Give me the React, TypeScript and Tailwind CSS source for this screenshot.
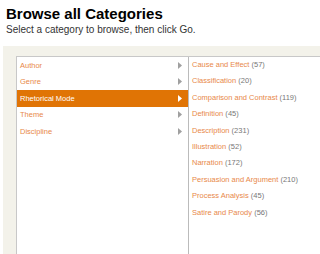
const LEFT = ['Author', 'Genre', 'Rhetorical Mode', 'Theme', 'Discipline'];
const RIGHT: [string, number][] = [
  ['Cause and Effect', 57],
  ['Classification', 20],
  ['Comparison and Contrast', 119],
  ['Definition', 45],
  ['Description', 231],
  ['Illustration', 52],
  ['Narration', 172],
  ['Persuasion and Argument', 210],
  ['Process Analysis', 45],
  ['Satire and Parody', 56],
];

function Arrow({ white }: { white?: boolean }) {
  return (
    <svg width="4" height="7" viewBox="0 0 4 7" className="shrink-0">
      <path d="M0 0 L4 3.5 L0 7 Z" fill={white ? '#ffffff' : '#a0a0a0'} />
    </svg>
  );
}

export default function App() {
  const selected = 'Rhetorical Mode';
  return (
    <div className="h-[254px] w-[320px] overflow-hidden bg-white font-['Liberation_Sans',Arial,sans-serif]">
      <div className="px-[6px] pt-[5px]">
        <h1 className="text-[15px] font-bold leading-[17px] text-black">Browse all Categories</h1>
        <p className="mt-[1px] text-[10px] leading-[14px] text-[#333]">Select a category to browse, then click Go.</p>
      </div>
      <div className="ml-[3px] mt-[9px] bg-[#f3f2ea] pl-[13px] pt-[10px]">
        <div className="flex h-[200px] border-l border-t border-[#c8c8c8] bg-white">
          <ul className="w-[172px] shrink-0 border-r border-[#bbb]">
            {LEFT.map((l) => {
              const on = l === selected;
              return (
                <li
                  key={l}
                  className={`flex h-[16.5px] items-center justify-between pl-[3px] pr-[6px] text-[7.5px] ${
                    on ? 'bg-[#e07405] text-white' : 'text-[#e8894a]'
                  }`}
                >
                  <span>{l}</span>
                  <Arrow white={on} />
                </li>
              );
            })}
          </ul>
          <ul className="pl-[3px]">
            {RIGHT.map(([name, n]) => (
              <li key={name} className="h-[16.4px] whitespace-nowrap text-[7.5px] leading-[16.4px]">
                <span className="text-[#e8894a]">{name}</span>
                <span className="text-[#777]"> ({n})</span>
              </li>
            ))}
          </ul>
        </div>
      </div>
    </div>
  );
}
